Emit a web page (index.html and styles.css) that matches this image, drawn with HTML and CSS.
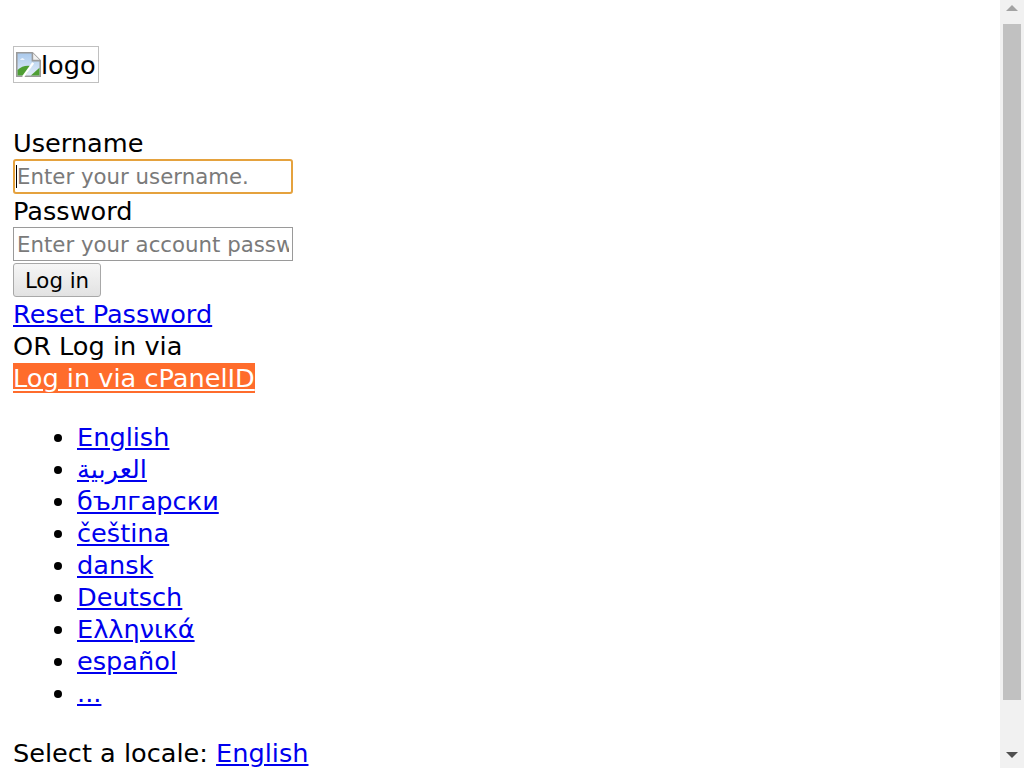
FILE: index.html
```html
<!DOCTYPE html>
<html lang="en">
<head>
<meta charset="utf-8">
<title>cPanel Login</title>
<link rel="stylesheet" href="styles.css">
</head>
<body>
<div class="logo-wrap">
  <span class="logo"><svg class="broken" width="25" height="25" viewBox="0 0 16 16" aria-hidden="true">
    <defs>
      <linearGradient id="sky" x1="0" y1="0" x2="0" y2="1">
        <stop offset="0" stop-color="#a9c9ec"/>
        <stop offset="1" stop-color="#e4eefa"/>
      </linearGradient>
    </defs>
    <path d="M0.5 0.5 H10.5 L15.5 5.5 V15.5 H0.5 Z" fill="url(#sky)" stroke="#9a9a9a" stroke-width="1"/>
    <path d="M10.5 0.5 V5.5 H15.5" fill="#f2f2f2" stroke="#9a9a9a" stroke-width="1"/>
    <path d="M2.5 5 q1.5 -2 3.2 0 z" fill="#ffffff"/>
    <path d="M1 15 V11.5 Q4.5 8 10 9 L6 15 Z" fill="#4e9e34"/>
    <path d="M9.5 15 L15 10 V15 Z" fill="#4e9e34"/>
    <path d="M11 7 L4.5 16" stroke="#ffffff" stroke-width="1.5"/>
  </svg><span class="logo-text">logo</span></span>
</div>
<form class="login">
  <label class="field-label" for="user">Username</label>
  <div class="input-wrap">
    <input id="user" class="field focused" type="text" placeholder="Enter your username.">
    <span class="caret"></span>
  </div>
  <label class="field-label pass-label" for="pass">Password</label>
  <input id="pass" class="field" type="password" placeholder="Enter your account password.">
  <button class="btn" type="button">Log in</button>
  <a class="line" href="#">Reset Password</a>
  <div class="line">OR Log in via</div>
  <div class="line"><a class="cpanelid" href="#">Log in via cPanelID</a></div>
</form>
<ul class="locales">
  <li><a href="#">English</a></li>
  <li><a href="#">العربية</a></li>
  <li><a href="#">български</a></li>
  <li><a href="#">čeština</a></li>
  <li><a href="#">dansk</a></li>
  <li><a href="#">Deutsch</a></li>
  <li><a href="#">Ελληνικά</a></li>
  <li><a href="#">español</a></li>
  <li><a href="#">...</a></li>
</ul>
<div class="select-locale">Select a locale: <a href="#">English</a></div>
<div class="scrollbar" aria-hidden="true">
  <span class="sb-up"></span>
  <span class="sb-thumb"></span>
  <span class="sb-down"></span>
</div>
</body>
</html>
```
FILE: styles.css
```css
html {
  background: #ffffff;
}
body {
  margin: 13px;
  font-family: "DejaVu Sans", sans-serif;
  font-size: 25.6px;
  line-height: 32px;
  color: #000000;
}
a {
  color: #0000ee;
}
.logo-wrap {
  padding-top: 33px;
  height: 37px;
  margin-bottom: 44px;
}
.logo {
  display: inline-flex;
  align-items: center;
  box-sizing: border-box;
  width: 86px;
  height: 37px;
  border: 1px solid #c0c0c0;
  padding-left: 2px;
}
.broken {
  display: block;
  flex: none;
}
.logo-text {
  line-height: 30px;
}
.login {
  display: flex;
  flex-direction: column;
  align-items: flex-start;
  margin: 0;
}
.field-label {
  display: block;
  height: 32px;
}
.pass-label {
  margin-top: 1px;
}
.input-wrap {
  position: relative;
}
.field {
  display: block;
  box-sizing: border-box;
  width: 280px;
  height: 34px;
  margin: 0;
  padding: 1px 3px;
  border: 1px solid #9a9a9a;
  font-family: "DejaVu Sans", sans-serif;
  font-size: 21.3px;
  color: #000;
  background: #fff;
}
.field::placeholder {
  color: #7a7a7a;
}
.field.focused {
  height: 35px;
  border: 2px solid #e5a23e;
  border-radius: 3px;
  padding-left: 2px;
}
.caret {
  position: absolute;
  left: 3px;
  top: 6px;
  width: 1px;
  height: 23px;
  background: #000;
}
.btn {
  margin: 2px 0 1px;
  box-sizing: border-box;
  width: 88px;
  height: 34px;
  padding: 0;
  border: 1px solid #a8a8a8;
  border-radius: 3px;
  background: linear-gradient(#f6f6f6, #e2e2e2);
  font-family: "DejaVu Sans", sans-serif;
  font-size: 21.3px;
  color: #000;
}
.line {
  display: block;
  height: 32px;
}
.cpanelid {
  background: #ff6c2c;
  color: #ffffff;
}
.locales {
  margin: 27px 0 28px;
  padding-left: 64px;
}
.select-locale {
  height: 32px;
}
.scrollbar {
  position: fixed;
  top: 0;
  right: 0;
  width: 24px;
  height: 100%;
  background: #f1f1f1;
  display: flex;
  flex-direction: column;
  align-items: center;
}
.sb-up,
.sb-down {
  flex: none;
  width: 0;
  height: 0;
  border-left: 6px solid transparent;
  border-right: 6px solid transparent;
}
.sb-up {
  margin-top: 5px;
  border-bottom: 6px solid #a3a3a3;
}
.sb-thumb {
  flex: none;
  width: 18px;
  height: 676px;
  margin-top: 13px;
  background: #c1c1c1;
}
.sb-down {
  margin-top: 52px;
  border-top: 6px solid #505050;
}
```
